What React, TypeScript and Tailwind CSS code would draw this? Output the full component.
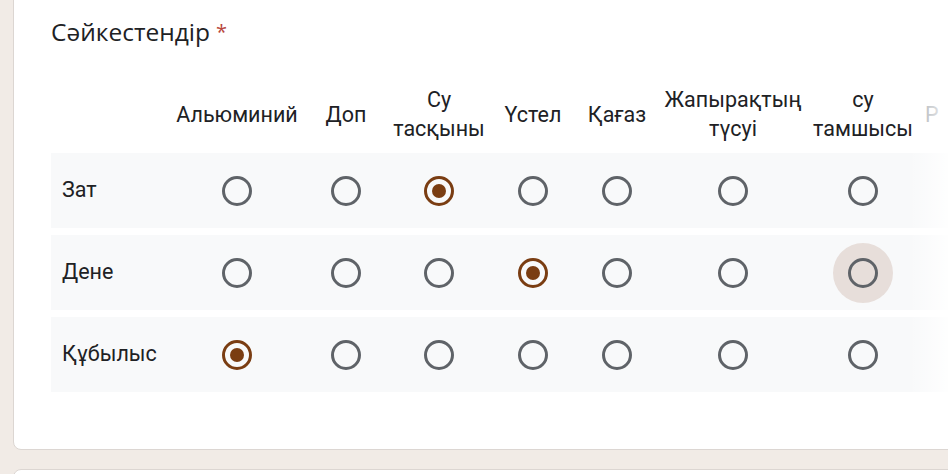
import React from 'react';

const columns = ['Альюминий', 'Доп', 'Су тасқыны', 'Үстел', 'Қағаз', 'Жапырақтың түсуі', 'су тамшысы', 'Р'];
const headerLines: string[][] = [
  ['Альюминий'],
  ['Доп'],
  ['Су', 'тасқыны'],
  ['Үстел'],
  ['Қағаз'],
  ['Жапырақтың', 'түсуі'],
  ['су', 'тамшысы'],
  ['Р'],
];

const rows = [
  { label: 'Зат', selected: 2 },
  { label: 'Дене', selected: 3 },
  { label: 'Құбылыс', selected: 0 },
];

const gridCols = 'grid grid-cols-[112px_148px_70px_116px_72px_96px_136px_124px_120px]';

function Radio({ checked, hover }: { checked: boolean; hover?: boolean }) {
  return (
    <div className="relative flex h-[60px] w-[60px] items-center justify-center">
      {hover && <div className="absolute inset-0 rounded-full bg-[#e7deda]" />}
      {checked ? (
        <div className="relative flex h-[30px] w-[30px] items-center justify-center rounded-full border-[3px] border-[#7a3d12]">
          <div className="h-[14px] w-[14px] rounded-full bg-[#7a3d12]" />
        </div>
      ) : (
        <div className="relative h-[30px] w-[30px] rounded-full border-[3px] border-[#5f6368]" />
      )}
    </div>
  );
}

export default function App() {
  return (
    <div className="relative h-[474px] w-[948px] overflow-hidden bg-[#f1ebe6] font-['Roboto',sans-serif] text-[#202124]">
      <div className="ml-[13px] mt-[-10px] h-[460px] w-[980px] rounded-lg border border-[#dcd6d2] bg-white pl-[37px] pt-[26px]">
        <div className="flex h-[30px] items-center font-['Open_Sans',sans-serif] text-[24.5px] leading-[30px]">
          <span>Сәйкестендір</span>
          <span className="ml-[6px] text-[20px] text-[#b8463c]">*</span>
        </div>

        <div className="relative mt-[38px]">
          <div className={`${gridCols} h-[58px] items-center text-[21.5px] leading-[29px]`}>
            <div />
            {headerLines.map((lines, i) => (
              <div
                key={columns[i]}
                className={`flex flex-col ${i === 7 ? 'items-start text-[#9aa0a6]' : 'items-center'}`}
              >
                {lines.map((l) => (
                  <span key={l} className="whitespace-nowrap">{l}</span>
                ))}
              </div>
            ))}
          </div>

          <div className="mt-[10px] flex flex-col gap-[7px]">
            {rows.map((row, r) => (
              <div key={row.label} className={`${gridCols} h-[75px] items-center bg-[#f8f9fa]`}>
                <div className="pl-[11px] text-[21.5px]">{row.label}</div>
                {columns.map((c, i) => (
                  <div key={c} className="flex items-center justify-center">
                    {i < 7 && <Radio checked={row.selected === i} hover={r === 1 && i === 6} />}
                  </div>
                ))}
              </div>
            ))}
          </div>

          <div className="absolute top-0 bottom-0 left-[858px] w-[40px] bg-gradient-to-r from-white/0 to-white/90" />
        </div>
      </div>

      <div className="ml-[13px] mt-[19px] h-[40px] w-[980px] rounded-lg border border-[#dcd6d2] bg-white" />
    </div>
  );
}
